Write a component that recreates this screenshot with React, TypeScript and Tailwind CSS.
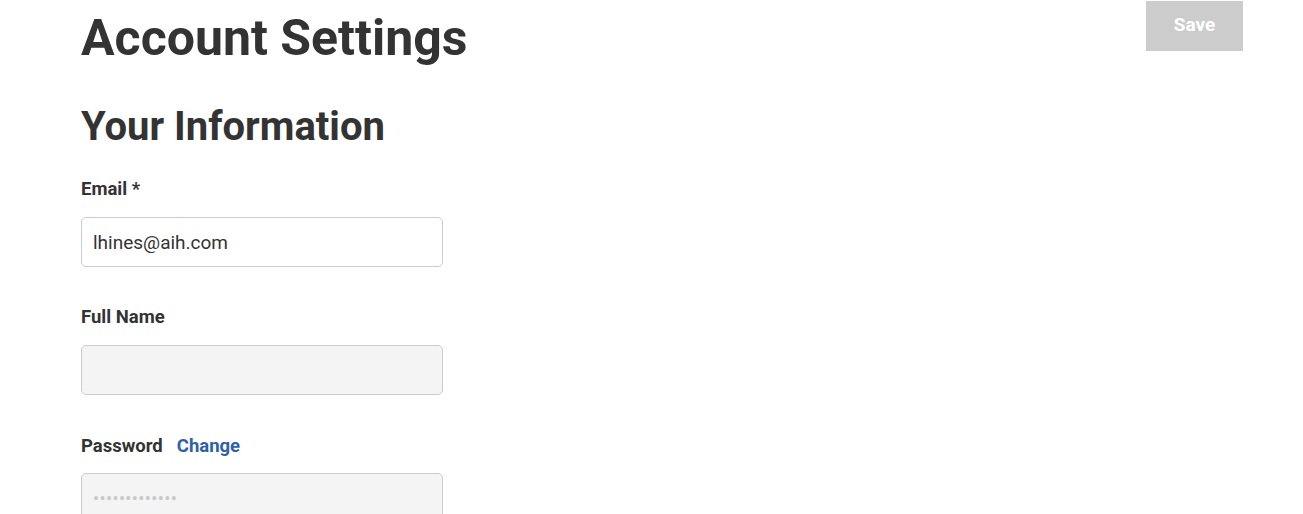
export default function App() {
  return (
    <div className="min-h-screen bg-white font-['Roboto',sans-serif] text-[#333333]">
      <div className="flex justify-between pl-[81px] pr-[60px]">
        <div className="w-[362px]">
          <h1 className="mt-[6px] text-[50px] font-bold leading-[64px] whitespace-nowrap">Account Settings</h1>
          <h2 className="mt-[33px] text-[40px] font-bold leading-[48px] whitespace-nowrap">Your Information</h2>

          <label className="mt-[26px] block text-[18.5px] font-bold leading-[24px]">Email *</label>
          <input
            className="mt-[16px] h-[50px] w-[362px] rounded-[5px] border border-[#cccccc] bg-white px-[11px] text-[19px] text-[#333333] outline-none"
            defaultValue="lhines@aih.com"
          />

          <label className="mt-[38px] block text-[18.5px] font-bold leading-[24px]">Full Name</label>
          <input className="mt-[16px] h-[50px] w-[362px] rounded-[5px] border border-[#cccccc] bg-[#f4f4f4] px-[11px] text-[19px] outline-none" />

          <div className="mt-[39px] flex items-baseline gap-[14px] text-[18.5px] font-bold leading-[24px]">
            <span>Password</span>
            <a className="text-[#2f5fa8]">Change</a>
          </div>
          <div className="mt-[15px] flex h-[50px] w-[362px] items-center rounded-[5px] border border-[#cccccc] bg-[#f4f4f4] px-[11px] text-[18px] tracking-[0.4px] text-[#c8c8c8]">
            •••••••••••••
          </div>
        </div>

        <button className="mt-[1px] h-[50px] w-[97px] bg-[#cccccc] pb-[1px] text-[19px] font-bold text-white">Save</button>
      </div>
    </div>
  );
}
